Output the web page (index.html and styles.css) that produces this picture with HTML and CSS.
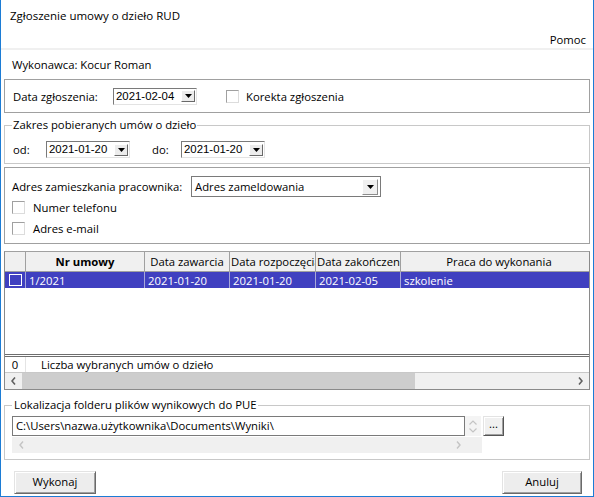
FILE: index.html
```html
<!DOCTYPE html>
<html lang="pl">
<head>
<meta charset="utf-8">
<title>Zgłoszenie umowy o dzieło RUD</title>
<link rel="stylesheet" href="styles.css">
</head>
<body>
<div class="window">
  <div class="titlebar">Zgłoszenie umowy o dzieło RUD</div>
  <div class="menubar"><span class="menu-item">Pomoc</span></div>
  <div class="executor">Wykonawca: Kocur Roman</div>

  <div class="panel panel-date">
    <span class="lbl lbl-date">Data zgłoszenia:</span>
    <div class="picker">
      <span class="picker-text">2021-02-04</span>
      <span class="dd-btn"><svg width="7" height="4" viewBox="0 0 7 4"><polygon points="0,0 7,0 3.5,4" fill="#000"/></svg></span>
    </div>
    <div class="check check-korekta"><span class="box"></span><span class="check-text">Korekta zgłoszenia</span></div>
  </div>

  <fieldset class="group group-range">
    <legend>Zakres pobieranych umów o dzieło</legend>
    <div class="range-row">
      <span class="lbl lbl-od">od:</span>
      <div class="picker">
        <span class="picker-text">2021-01-20</span>
        <span class="dd-btn"><svg width="7" height="4" viewBox="0 0 7 4"><polygon points="0,0 7,0 3.5,4" fill="#000"/></svg></span>
      </div>
      <span class="lbl lbl-do">do:</span>
      <div class="picker">
        <span class="picker-text">2021-01-20</span>
        <span class="dd-btn"><svg width="7" height="4" viewBox="0 0 7 4"><polygon points="0,0 7,0 3.5,4" fill="#000"/></svg></span>
      </div>
    </div>
  </fieldset>

  <div class="panel panel-addr">
    <div class="addr-row">
      <span class="lbl lbl-addr">Adres zamieszkania pracownika:</span>
      <div class="combo">
        <span class="combo-text">Adres zameldowania</span>
        <span class="combo-btn"><svg width="7" height="4" viewBox="0 0 7 4"><polygon points="0,0 7,0 3.5,4" fill="#000"/></svg></span>
      </div>
    </div>
    <div class="check check-row"><span class="box"></span><span class="check-text">Numer telefonu</span></div>
    <div class="check check-row"><span class="box"></span><span class="check-text">Adres e-mail</span></div>
  </div>

  <div class="grid">
    <div class="grid-head">
      <div class="c c0"></div>
      <div class="c c1 hc bold">Nr umowy</div>
      <div class="c c2 hc">Data zawarcia</div>
      <div class="c c3 hl">Data rozpoczęcia</div>
      <div class="c c4 hl">Data zakończenia</div>
      <div class="c c5 hc hc-last">Praca do wykonania</div>
    </div>
    <div class="grid-row selected">
      <div class="c c0"><span class="row-box"></span></div>
      <div class="c c1">1/2021</div>
      <div class="c c2">2021-01-20</div>
      <div class="c c3">2021-01-20</div>
      <div class="c c4">2021-02-05</div>
      <div class="c c5">szkolenie</div>
    </div>
    <div class="grid-fill"></div>
    <div class="grid-foot">
      <div class="fc f0">0</div>
      <div class="fc f1">Liczba wybranych umów o dzieło</div>
    </div>
    <div class="hscroll">
      <span class="arrow"><svg width="5" height="8" viewBox="0 0 5 8"><path d="M4 0.5 L1 4 L4 7.5" fill="none" stroke="#606060" stroke-width="1.6"/></svg></span>
      <span class="thumb"></span>
      <span class="track"></span>
      <span class="arrow"><svg width="5" height="8" viewBox="0 0 5 8"><path d="M1 0.5 L4 4 L1 7.5" fill="none" stroke="#606060" stroke-width="1.6"/></svg></span>
    </div>
  </div>

  <fieldset class="group group-path">
    <legend>Lokalizacja folderu plików wynikowych do PUE</legend>
    <div class="path-row">
      <div class="textbox">C:\Users\nazwa.użytkownika\Documents\Wyniki\</div>
      <div class="spinner">
        <svg width="8" height="5" viewBox="0 0 8 5"><path d="M0.5 4.5 L4 1 L7.5 4.5" fill="none" stroke="#c4c4c4" stroke-width="1.2"/></svg>
        <svg width="8" height="5" viewBox="0 0 8 5"><path d="M0.5 0.5 L4 4 L7.5 0.5" fill="none" stroke="#c4c4c4" stroke-width="1.2"/></svg>
      </div>
      <div class="browse">...</div>
    </div>
    <div class="path-scroll">
      <span class="arrow"><svg width="5" height="8" viewBox="0 0 5 8"><path d="M4 0.5 L1 4 L4 7.5" fill="none" stroke="#c4c4c4" stroke-width="1.4"/></svg></span>
      <span class="arrow"><svg width="5" height="8" viewBox="0 0 5 8"><path d="M1 0.5 L4 4 L1 7.5" fill="none" stroke="#c4c4c4" stroke-width="1.4"/></svg></span>
    </div>
  </fieldset>

  <div class="buttons">
    <div class="btn btn-ok">Wykonaj</div>
    <div class="btn btn-cancel">Anuluj</div>
  </div>
</div>
</body>
</html>
```

FILE: styles.css
```css
* { box-sizing: border-box; }
html, body { margin: 0; padding: 0; }
body {
  width: 594px;
  height: 497px;
  background: #fff;
  font-family: "Open Sans", "Noto Sans", sans-serif;
  font-size: 11.3px;
  color: #000;
  overflow: hidden;
}
.window {
  width: 594px;
  height: 497px;
  border: 1px solid #1c7cd5;
  border-top: 0;
  display: flex;
  flex-direction: column;
}
.titlebar {
  height: 31px;
  line-height: 31px;
  padding-left: 9px;
  font-size: 11.5px;
}
.menubar {
  height: 19px;
  line-height: 17px;
  text-align: right;
  padding-right: 7px;
  border-bottom: 2px solid #f0f0f0;
}
.executor {
  height: 29px;
  line-height: 29px;
  padding-left: 11px;
}
.lbl { display: inline-block; white-space: nowrap; }

.panel {
  margin: 0 3px;
  border: 1px solid #a0a0a0;
}
.panel-date {
  height: 34px;
  display: flex;
  align-items: center;
  padding-left: 8px;
}
.lbl-date { width: 100px; }

.picker {
  width: 84px;
  height: 17px;
  display: flex;
  align-items: center;
  border: 1px solid;
  border-color: #7a7a7a #e3e3e3 #e3e3e3 #7a7a7a;
  background: #fff;
  flex-shrink: 0;
}
.picker-text {
  flex: 1;
  padding-left: 2px;
  font-family: "Liberation Sans", Arial, sans-serif;
  font-size: 11.4px;
  line-height: 15px;
  white-space: nowrap;
  overflow: hidden;
}
.dd-btn {
  width: 14px;
  height: 12px;
  margin-right: 1px;
  background: #ececec;
  border: 1px solid;
  border-color: #fff #696969 #696969 #fff;
  display: flex;
  align-items: center;
  justify-content: center;
  flex-shrink: 0;
}
.dd-btn svg { display: block; }

.check { display: flex; align-items: center; }
.box {
  width: 13px;
  height: 13px;
  border: 1px solid;
  border-color: #a0a0a0 #dcdcdc #dcdcdc #a0a0a0;
  background: #fff;
  flex-shrink: 0;
}
.check-korekta { margin-left: 29px; }
.check-korekta .check-text { margin-left: 7px; }

.group {
  margin: 0 3px;
  padding: 0;
  border: 1px solid #c8c8c8;
  min-inline-size: 0;
}
.group legend {
  padding: 0 1px;
  line-height: 14px;
}
.group-range { margin-top: 5px; padding: 9px 0 5px 8px; }
.group-range legend { margin-left: -1px; }
.range-row { display: flex; align-items: center; height: 17px; }
.lbl-od { width: 33px; }
.lbl-do { width: 29px; margin-left: 22px; }

.panel-addr {
  margin-top: 3px;
  height: 77px;
  padding: 8px 0 4px 7px;
}
.addr-row { display: flex; align-items: center; height: 21px; }
.lbl-addr { width: 179px; }
.combo {
  width: 190px;
  height: 21px;
  border: 1px solid #7a7a7a;
  display: flex;
  align-items: center;
}
.combo-text { flex: 1; padding-left: 3px; }
.combo-btn {
  width: 16px;
  height: 16px;
  margin-right: 2px;
  background: #f0f0f0;
  border: 1px solid;
  border-color: #fff #8c8c8c #8c8c8c #fff;
  display: flex;
  align-items: center;
  justify-content: center;
}
.combo-btn svg { display: block; }
.check-row { height: 21px; }
.check-row .check-text { margin-left: 8px; }

.grid {
  margin: 7px 3px 0;
  height: 139px;
  border: 1px solid #8a8a8a;
  border-top-color: #a0a0a0;
  display: flex;
  flex-direction: column;
}
.grid-head, .grid-row { display: flex; }
.grid-head {
  height: 20px;
  background: #f0f0f0;
  border-bottom: 1px solid #a0a0a0;
}
.grid-row { height: 16px; }
.c {
  border-right: 1px solid #a0a0a0;
  white-space: nowrap;
  overflow: hidden;
  display: flex;
  align-items: center;
  padding-left: 3px;
}
.c0 { width: 21px; padding-left: 0; }
.c1 { width: 119px; }
.c2 { width: 85px; }
.c3 { width: 86px; }
.c4 { width: 85px; }
.c5 { flex: 1; border-right: 0; }
.grid-head .c { padding-left: 0; }
.hc { justify-content: center; }
.hl { justify-content: flex-start; padding-left: 1px !important; }
.hc-last { padding-left: 8px !important; }
.bold { font-weight: bold; }
.selected { background: #4040c0; color: #fff; }
.selected .c { border-right-color: #a8a8d8; }
.row-box {
  width: 13px;
  height: 12px;
  margin-left: 4px;
  border: 1px solid #fff;
}
.grid-fill { flex: 1; background: #fff; }
.grid-foot {
  height: 15px;
  border-top: 3px double #6e6e6e;
  border-bottom: 1px solid #c8c8c8;
  display: flex;
  box-sizing: content-box;
}
.fc { display: flex; align-items: center; white-space: nowrap; }
.f0 { width: 21px; justify-content: center; border-right: 1px solid #e4e4e4; }
.f1 { padding-left: 15px; }
.hscroll {
  height: 16px;
  display: flex;
  background: #f0f0f0;
}
.hscroll .arrow {
  width: 17px;
  display: flex;
  align-items: center;
  justify-content: center;
}
.hscroll .thumb { width: 393px; background: #cdcdcd; }
.hscroll .track { flex: 1; }

.group-path { margin-top: 8px; padding: 4px 0 6px 7px; }
.group-path legend { padding: 0 2px; }
.path-row { display: flex; height: 21px; }
.textbox {
  width: 453px;
  height: 20px;
  border: 1px solid #7a7a7a;
  padding-left: 3px;
  line-height: 18px;
  white-space: nowrap;
}
.spinner {
  width: 16px;
  height: 20px;
  background: #f4f4f4;
  display: flex;
  flex-direction: column;
  align-items: center;
  justify-content: center;
  gap: 3px;
}
.spinner svg { display: block; }
.browse {
  width: 21px;
  height: 20px;
  margin-left: 2px;
  background: #f0f0f0;
  border: 1px solid;
  border-color: #e3e3e3 #555 #555 #e3e3e3;
  box-shadow: inset 1px 1px #fff, inset -1px -1px #a0a0a0;
  text-align: center;
  line-height: 14px;
}
.path-scroll {
  width: 470px;
  height: 16px;
  background: #f0f0f0;
  display: flex;
  justify-content: space-between;
  align-items: center;
  padding: 0 21px 0 7px;
}
.path-scroll svg { display: block; }

.buttons {
  margin-top: 11px;
  display: flex;
  justify-content: space-between;
  padding: 0 11px 0 13px;
}
.btn {
  height: 23px;
  background: #ededed;
  border: 1px solid;
  border-color: #e3e3e3 #6a6a6a #6a6a6a #e3e3e3;
  box-shadow: inset 1px 1px #fff, inset -1px -1px #a0a0a0;
  text-align: center;
  line-height: 20px;
}
.btn-ok { width: 82px; }
.btn-cancel { width: 80px; }
```
